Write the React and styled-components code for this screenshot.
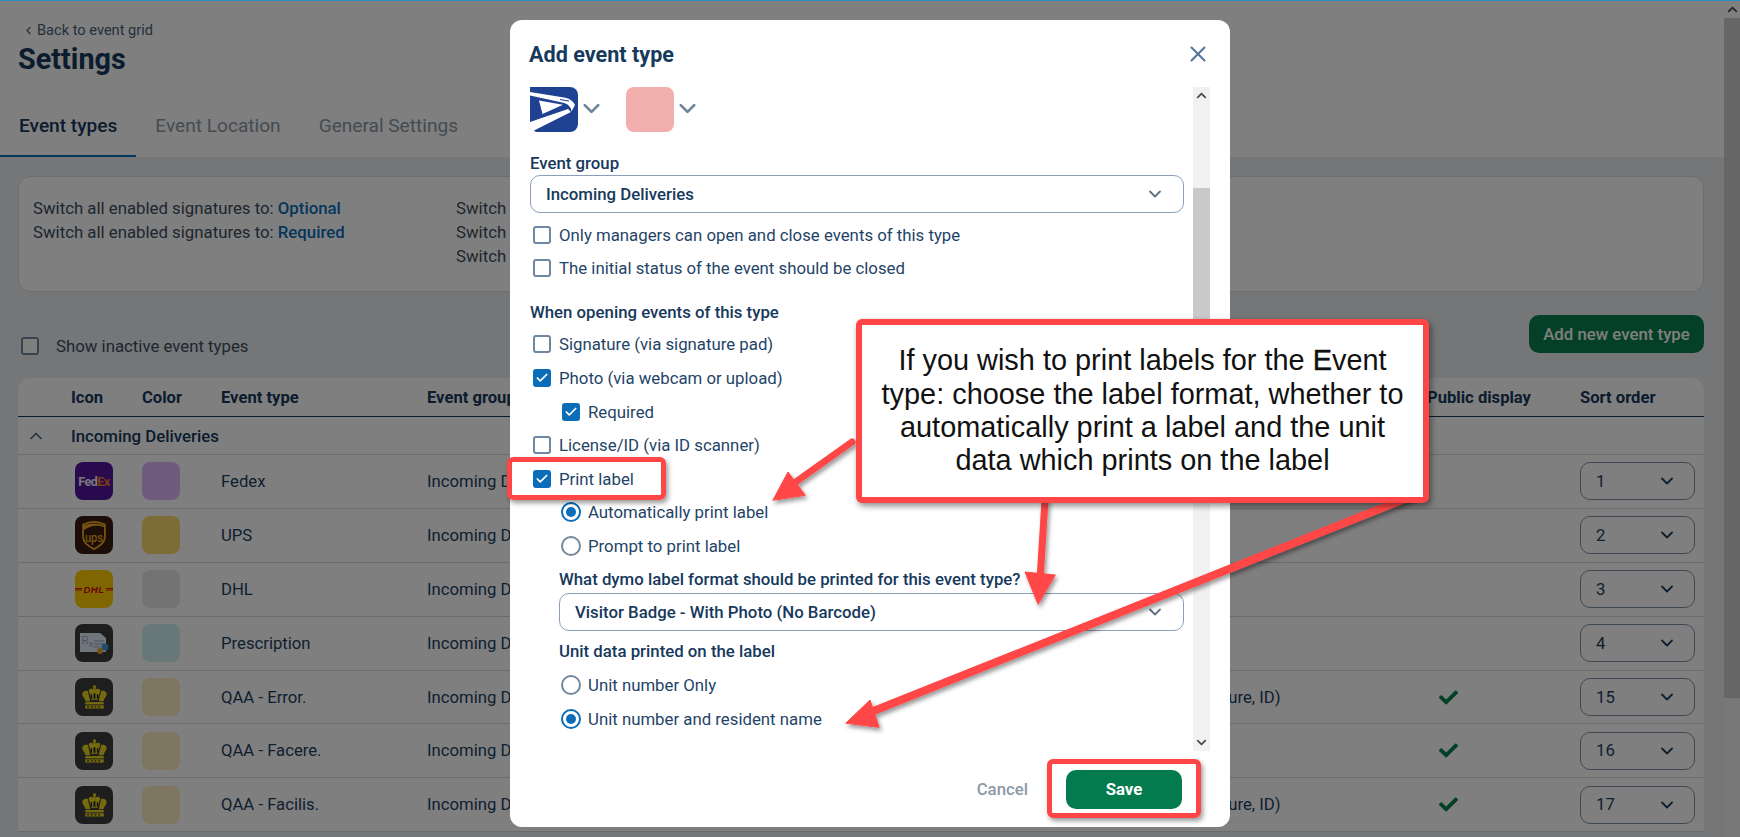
import React from "react";
import styled, { createGlobalStyle } from "styled-components";
import { ChevronDown, ChevronLeft, ChevronUp, Check, X } from "lucide-react";
import { FaCheck } from "react-icons/fa";

const GlobalStyle = createGlobalStyle`
  html, body { margin: 0; padding: 0; }
  body { font-family: Roboto, "Liberation Sans", sans-serif; color: #16395c; }
  * { box-sizing: border-box; }
`;

const Page = styled.div`
  position: relative;
  display: flex;
  width: 1740px;
  height: 837px;
  overflow: hidden;
  background: #ebecf1;
`;
const TopLine = styled.div`
  position: absolute;
  z-index: 5;
  top: 0;
  left: 0;
  right: 0;
  height: 1px;
  background: #2d8ac4;
`;
const Main = styled.div`
  flex: 1;
  min-width: 0;
`;
const PageScrollbar = styled.div`
  width: 16px;
  display: flex;
  flex-direction: column;
  background: #f1f1f1;
`;
const PageScrollBtn = styled.div`
  height: 18px;
  display: flex;
  align-items: center;
  justify-content: center;
  color: #505050;
  background: #ffffff;
`;
const PageScrollThumb = styled.div`
  height: 680px;
  background: #cdcdcd;
`;

/* header */
const Header = styled.header`
  height: 157px;
  background: #fff;
  padding-top: 22px;
  display: flex;
  flex-direction: column;
`;
const BackLink = styled.a`
  display: flex;
  align-items: center;
  gap: 2px;
  padding-left: 22px;
  height: 16px;
  font-size: 14.6px;
  color: #49617a;
`;
const PageTitle = styled.h1`
  margin: 3px 0 0 18px;
  font-size: 28.8px;
  line-height: 36px;
  font-weight: 700;
  color: #16395c;
`;
const Tabs = styled.nav`
  display: flex;
  margin-top: auto;
`;
const Tab = styled.div`
  height: 47px;
  padding: 5px 19px 0;
  font-size: 19.1px;
  line-height: 22px;
  font-weight: ${(p) => (p.$active ? 500 : 400)};
  color: ${(p) => (p.$active ? "#16395c" : "#8a96a3")};
  border-bottom: 2px solid ${(p) => (p.$active ? "#0b6cb8" : "transparent")};
`;

/* content */
const Content = styled.div`
  padding: 19px 20px 0 18px;
`;
const SwitchPanel = styled.section`
  height: 116px;
  padding: 19px 14px;
  background: #fff;
  border: 1px solid #dcdde2;
  border-radius: 12px;
  display: grid;
  grid-template-columns: 423px 1fr;
  font-size: 16.8px;
  line-height: 24px;
  color: #3a4c5e;
`;
const SwitchLine = styled.div`
  white-space: nowrap;
`;
const SwitchLink = styled.span`
  font-weight: 500;
  color: #0b6cb8;
`;
const Toolbar = styled.div`
  height: 86px;
  display: flex;
  align-items: center;
  justify-content: space-between;
  padding: 0 0 0 3px;
`;
const InactiveLabel = styled.div`
  display: flex;
  align-items: center;
  gap: 17px;
  font-size: 16.8px;
  color: #3a4c5e;
  margin-top: 22px;
`;
const AddButton = styled.button`
  width: 175px;
  height: 38px;
  margin-top: -2px;
  border: 0;
  border-radius: 10px;
  background: #06804f;
  color: #fff;
  font: 500 16.8px Roboto, sans-serif;
`;
const TableWrap = styled.div`
  background: #fff;
  border-radius: 12px 12px 0 0;
`;
const columns = "53px 71px 79px 206px 697px 303px 153px 124px";
const HeadRow = styled.div`
  display: grid;
  grid-template-columns: ${columns};
  align-items: center;
  height: 39px;
  font-size: 16.6px;
  font-weight: 700;
  color: #16395c;
  border-bottom: 1px solid #16395c;
  white-space: nowrap;
`;
const GroupRow = styled.div`
  display: grid;
  grid-template-columns: 53px 1fr;
  align-items: center;
  height: 38px;
  font-size: 16.8px;
  font-weight: 500;
  color: #16395c;
  border-bottom: 1px solid #d6d6d6;
`;
const CollapseCell = styled.div`
  display: flex;
  justify-content: center;
  padding-right: 17px;
  color: #4f6578;
`;
const Row = styled.div`
  display: grid;
  grid-template-columns: ${columns};
  align-items: center;
  height: 53.9px;
  font-size: 16.7px;
  color: #1d3f60;
  border-bottom: 1px solid #d6d6d6;
  white-space: nowrap;
`;
const IconBox = styled.div`
  width: 38px;
  height: 38px;
  margin-left: 4px;
  border-radius: 8px;
  overflow: hidden;
  display: flex;
  align-items: center;
  justify-content: center;
  background: ${(p) => p.$bg};
`;
const Swatch = styled.div`
  width: 38px;
  height: 38px;
  border-radius: 8px;
  background: ${(p) => p.$color};
`;
const PublicCheck = styled.div`
  padding-left: 12px;
  color: #06804f;
  display: flex;
`;
const SortSelect = styled.div`
  width: 115px;
  height: 38px;
  padding: 0 17px 0 15px;
  display: flex;
  align-items: center;
  justify-content: space-between;
  border: 1px solid #7f93a8;
  border-radius: 10px;
  font-size: 16.7px;
  color: #1d3f60;
`;

/* modal */
const Backdrop = styled.div`
  position: absolute;
  inset: 0;
  z-index: 2;
  background: rgba(0, 0, 0, 0.5);
  display: flex;
  justify-content: center;
  align-items: flex-start;
  padding-top: 20px;
`;
const Modal = styled.div`
  width: 720px;
  height: 807px;
  background: #fff;
  border-radius: 12px;
  padding: 0 20px;
  display: flex;
  flex-direction: column;
`;
const ModalHead = styled.div`
  height: 67px;
  padding-top: 1px;
  display: flex;
  align-items: center;
  justify-content: space-between;
`;
const ModalTitle = styled.h2`
  margin: 0 0 0 -1px;
  font-size: 21.6px;
  font-weight: 700;
  color: #16395c;
`;
const CloseBtn = styled.div`
  display: flex;
  margin-right: -1px;
  color: #55789a;
`;
const ModalBody = styled.div`
  height: 664px;
  display: flex;
`;
const Form = styled.div`
  flex: 1;
  min-width: 0;
  padding-right: 8px;
`;
const PickerRow = styled.div`
  display: flex;
  align-items: center;
  height: 45px;
`;
const Picker = styled.div`
  display: flex;
  align-items: center;
  margin-right: 21px;
  color: #6c8598;
  svg:last-child { margin-top: -2px; }
`;
const ColorPick = styled.div`
  width: 48px;
  height: 45px;
  border-radius: 8px;
  background: #f2adad;
`;
const FieldLabel = styled.div`
  margin-top: ${(p) => p.$top}px;
  margin-left: ${(p) => p.$indent || 0}px;
  height: 18px;
  font-size: 16.8px;
  line-height: 18px;
  font-weight: 500;
  color: #16395c;
  white-space: nowrap;
`;
const Select = styled.div`
  margin-top: ${(p) => p.$top}px;
  margin-left: ${(p) => p.$indent || 0}px;
  height: 38px;
  padding: 0 18px 0 15px;
  display: flex;
  align-items: center;
  justify-content: space-between;
  border: 1px solid #8aa0b8;
  border-radius: 10px;
  font-size: 16.8px;
  font-weight: 500;
  color: #16395c;
  svg { color: #5b7085; }
`;
const OptionList = styled.div`
  margin-top: ${(p) => p.$top}px;
`;
const Option = styled.div`
  height: 33.6px;
  display: flex;
  align-items: center;
  gap: 8px;
  padding-left: ${(p) => p.$indent || 3}px;
  font-size: 16.8px;
  color: #1f4468;
`;
const Box = styled.span`
  width: 18px;
  height: 18px;
  flex: none;
  display: flex;
  align-items: center;
  justify-content: center;
  border-radius: 3px;
  color: #fff;
  background: ${(p) => (p.$on ? "#0b6cb8" : "#fff")};
  border: 2px solid ${(p) => (p.$on ? "#0b6cb8" : "#6f87a0")};
`;
const Radio = styled.span`
  width: 20px;
  height: 20px;
  flex: none;
  margin-right: -1px;
  border-radius: 50%;
  display: flex;
  align-items: center;
  justify-content: center;
  border: 2px solid ${(p) => (p.$on ? "#0b6cb8" : "#73879a")};
  &::after {
    content: "";
    width: 10px;
    height: 10px;
    border-radius: 50%;
    background: ${(p) => (p.$on ? "#0b6cb8" : "transparent")};
  }
`;
const ScrollTrack = styled.div`
  width: 17px;
  margin-left: 1px;
  display: flex;
  flex-direction: column;
  background: #f1f1f1;
`;
const ScrollArrow = styled.div`
  height: 17px;
  display: flex;
  align-items: center;
  justify-content: center;
  color: #505050;
`;
const ScrollGap = styled.div`
  height: ${(p) => p.$h}px;
`;
const ScrollThumb = styled.div`
  height: 240px;
  background: #c9c9c9;
`;
const Footer = styled.div`
  flex: 1;
  display: flex;
  align-items: center;
  justify-content: flex-end;
  gap: 38px;
  padding: 0 28px 0 0;
`;
const CancelText = styled.span`
  font-size: 16.8px;
  font-weight: 500;
  color: #8d98a5;
`;
const SaveButton = styled.button`
  width: 116px;
  height: 39px;
  border: 0;
  border-radius: 10px;
  background: #047b4e;
  color: #fff;
  font: 700 16.8px Roboto, sans-serif;
`;

/* annotations on top of the screenshot */
const Callout = styled.div`
  position: absolute;
  z-index: 4;
  left: 856px;
  top: 319px;
  width: 573px;
  height: 184px;
  padding: 0 16px;
  display: flex;
  align-items: center;
  justify-content: center;
  text-align: center;
  background: #fff;
  border: 6px solid #ff4646;
  border-radius: 6px;
  box-shadow: 2px 3px 6px rgba(0, 0, 0, 0.45);
  font-family: "Liberation Sans", Arial, sans-serif;
  font-size: 28.9px;
  line-height: 33.3px;
  color: #111;
`;
const CalloutText = styled.div``;
const BoldLetter = styled.span`
  -webkit-text-stroke: 0.4px #111;
`;
const Highlight = styled.div`
  position: absolute;
  z-index: 3;
  left: ${(p) => p.$x}px;
  top: ${(p) => p.$y}px;
  width: ${(p) => p.$w}px;
  height: ${(p) => p.$h}px;
  border: 5px solid #ff4646;
  border-radius: 6px;
  box-shadow: 2px 3px 5px rgba(0, 0, 0, 0.4);
`;
const ArrowLayer = styled.svg`
  position: absolute;
  z-index: 4;
  inset: 0;
  pointer-events: none;
`;

const Crown = () => (
  <svg width="27" height="24" viewBox="0 0 28 26" fill="#ecd41c">
    <circle cx="14" cy="1.8" r="1.6" />
    <rect x="12.8" y="2" width="2.4" height="5" />
    <path d="M14 6c-3-3-7-2-6 1 .6 2 1.8 4 2.4 9h7.2c.6-5 1.8-7 2.4-9 1-3-3-4-6-1z" />
    <path d="M7 6.5C3 5.5 0 8 1 11c.8 2.2 2.6 3.4 3.4 6.5h4.8C8.8 13 7.2 10 7 6.5z" />
    <path d="M21 6.5c4-1 7 1.5 6 4.5-.8 2.2-2.6 3.4-3.4 6.5h-4.8c.4-4.5 2-7.5 2.2-11z" />
    <rect x="4" y="18.5" width="20" height="2.5" />
    <rect x="4" y="22" width="20" height="3.5" />
    <path d="M6 23h2v1.5H6zM10 23h2v1.5h-2zM14 23h2v1.5h-2zM18 23h2v1.5h-2z" fill="#222" />
    <path d="M13 9h2v6h-2zM10 10h1.5v5H10zM16.5 10H18v5h-1.5z" fill="#222" />
  </svg>
);

const LogoText = styled.span`
  font: ${(p) => p.$font};
  color: ${(p) => p.$color};
  letter-spacing: ${(p) => p.$spacing || "0"};
`;

const FedexIcon = () => (
  <IconBox $bg="#55149f">
    <LogoText $font="700 12.5px Roboto, sans-serif" $color="#f2eff6" $spacing="-0.5px">Fed</LogoText>
    <LogoText $font="700 12.5px Roboto, sans-serif" $color="#f0781e" $spacing="-0.5px">Ex</LogoText>
  </IconBox>
);

const UpsIcon = () => (
  <IconBox $bg="#3a1a10">
    <svg width="26" height="29" viewBox="0 0 28 32">
      <path d="M2 4c8-4 16-4 24 0v14c0 6-6 10-12 13C8 28 2 24 2 18z" fill="none" stroke="#e8a81c" strokeWidth="2" />
      <path d="M3 5c7-3 15-3 22 0v2C18 4 10 5 3 10z" fill="#e8a81c" />
      <text x="14" y="23" fontFamily="Roboto, sans-serif" fontWeight="500" fontSize="15" fill="#e8a81c" textAnchor="middle" textLength="20" lengthAdjust="spacingAndGlyphs">ups</text>
    </svg>
  </IconBox>
);

const DhlIcon = () => (
  <IconBox $bg="#ffcc00">
    <svg width="38" height="14" viewBox="0 0 38 14">
      <path d="M0 6.5h7M0 8h7M31 6.5h7M31 8h7" stroke="#d40511" strokeWidth="0.9" />
      <text x="19" y="11" fontFamily="Liberation Sans, sans-serif" fontStyle="italic" fontWeight="700" fontSize="9.5" fill="#d40511" textAnchor="middle" letterSpacing="0.5">DHL</text>
    </svg>
  </IconBox>
);

const RxIcon = () => (
  <IconBox $bg="#3c3c3c">
    <svg width="30" height="24" viewBox="0 0 30 24">
      <path d="M1 2h20l6 5v14H1z" fill="#e3ecf8" />
      <text x="2.5" y="13" fontFamily="Liberation Sans, sans-serif" fontSize="10" fill="#8fa6c9">R<tspan dy="3" fontSize="9">x</tspan></text>
      <path d="M15 10h10M15 13h10M15 16h6" stroke="#8fa6c9" strokeWidth="1.2" />
      <circle cx="26" cy="16" r="3.5" fill="#3d9ad6" />
      <circle cx="21" cy="20" r="3" fill="#e0a528" />
    </svg>
  </IconBox>
);

const CrownIcon = () => (
  <IconBox $bg="#3c3c3c">
    <Crown />
  </IconBox>
);

const UspsLogo = () => (
  <svg width="48" height="45" viewBox="0 0 48 45">
    <path d="M0 0h40a8 8 0 0 1 8 8v29a8 8 0 0 1-8 8H6l-6-4z" fill="#1f4192" />
    <path d="M0 5l34 5.5c6 1 9 3.5 11 7.5l-3.5 6.500C41 20 38 16.5 32 15.500L0 8.500z" fill="#fff" />
    <path d="M9 13.500l24 4.200L12.500 27z" fill="#fff" />
    <path d="M0 35l38-13 3 3L3 44l-3-3z" fill="#fff" />
    <path d="M30 12.500l9 1.500" stroke="#1f4192" strokeWidth="1" />
  </svg>
);

const rows = [
  { icon: <FedexIcon />, color: "#dcb6fb", name: "Fedex", sort: 1 },
  { icon: <UpsIcon />, color: "#fdd86c", name: "UPS", sort: 2 },
  { icon: <DhlIcon />, color: "#e6e6e6", name: "DHL", sort: 3 },
  { icon: <RxIcon />, color: "#d0f0f2", name: "Prescription", sort: 4 },
  { icon: <CrownIcon />, color: "#fdecc0", name: "QAA - Error.", data: "(Photo, Signature, ID)", pub: true, sort: 15 },
  { icon: <CrownIcon />, color: "#fdecc0", name: "QAA - Facere.", pub: true, sort: 16 },
  { icon: <CrownIcon />, color: "#fdecc0", name: "QAA - Facilis.", data: "(Photo, Signature, ID)", pub: true, sort: 17 },
];

const CheckOption = ({ on, indent, children }) => (
  <Option $indent={indent}>
    <Box $on={on}>{on && <Check size={14} strokeWidth={3} />}</Box>
    {children}
  </Option>
);

const RadioOption = ({ on, children }) => (
  <Option $indent={31}>
    <Radio $on={on} />
    {children}
  </Option>
);

export default function App() {
  return (
    <Page>
      <GlobalStyle />
      <TopLine />
      <Main>
        <Header>
          <BackLink>
            <ChevronLeft size={13} strokeWidth={2} />
            Back to event grid
          </BackLink>
          <PageTitle>Settings</PageTitle>
          <Tabs>
            <Tab $active>Event types</Tab>
            <Tab>Event Location</Tab>
            <Tab>General Settings</Tab>
          </Tabs>
        </Header>
        <Content>
          <SwitchPanel>
            <div>
              <SwitchLine>Switch all enabled signatures to: <SwitchLink>Optional</SwitchLink></SwitchLine>
              <SwitchLine>Switch all enabled signatures to: <SwitchLink>Required</SwitchLink></SwitchLine>
            </div>
            <div>
              <SwitchLine>Switch</SwitchLine>
              <SwitchLine>Switch</SwitchLine>
              <SwitchLine>Switch</SwitchLine>
            </div>
          </SwitchPanel>
          <Toolbar>
            <InactiveLabel>
              <Box />
              Show inactive event types
            </InactiveLabel>
            <AddButton>Add new event type</AddButton>
          </Toolbar>
          <TableWrap>
            <HeadRow>
              <span />
              <span>Icon</span>
              <span>Color</span>
              <span>Event type</span>
              <span>Event group</span>
              <span />
              <span>Public display</span>
              <span>Sort order</span>
            </HeadRow>
            <GroupRow>
              <CollapseCell><ChevronUp size={20} /></CollapseCell>
              <span>Incoming Deliveries</span>
            </GroupRow>
            {rows.map((r) => (
              <Row key={r.name}>
                <span />
                {r.icon}
                <Swatch $color={r.color} />
                <span>{r.name}</span>
                <span>Incoming Deliveries</span>
                <span>{r.data}</span>
                {r.pub ? <PublicCheck><FaCheck size={19} /></PublicCheck> : <span />}
                <SortSelect>
                  {r.sort}
                  <ChevronDown size={20} strokeWidth={2.2} />
                </SortSelect>
              </Row>
            ))}
          </TableWrap>
        </Content>
      </Main>
      <PageScrollbar>
        <PageScrollBtn><ChevronUp size={15} strokeWidth={3} /></PageScrollBtn>
        <PageScrollThumb />
      </PageScrollbar>

      <Backdrop>
        <Modal>
          <ModalHead>
            <ModalTitle>Add event type</ModalTitle>
            <CloseBtn><X size={26} strokeWidth={1.9} /></CloseBtn>
          </ModalHead>
          <ModalBody>
            <Form>
              <PickerRow>
                <Picker>
                  <UspsLogo />
                  <ChevronDown size={27} strokeWidth={2.4} />
                </Picker>
                <Picker>
                  <ColorPick />
                  <ChevronDown size={27} strokeWidth={2.4} />
                </Picker>
              </PickerRow>
              <FieldLabel $top={22}>Event group</FieldLabel>
              <Select $top={3}>
                Incoming Deliveries
                <ChevronDown size={20} strokeWidth={2.2} />
              </Select>
              <OptionList $top={5}>
                <CheckOption>Only managers can open and close events of this type</CheckOption>
                <CheckOption>The initial status of the event should be closed</CheckOption>
              </OptionList>
              <FieldLabel $top={18}>When opening events of this type</FieldLabel>
              <OptionList $top={6.5}>
                <CheckOption>Signature (via signature pad)</CheckOption>
                <CheckOption on>Photo (via webcam or upload)</CheckOption>
                <CheckOption on indent={32}>Required</CheckOption>
                <CheckOption>License/ID (via ID scanner)</CheckOption>
                <CheckOption on>Print label</CheckOption>
                <RadioOption on>Automatically print label</RadioOption>
                <RadioOption>Prompt to print label</RadioOption>
              </OptionList>
              <FieldLabel $top={7.5} $indent={29}>What dymo label format should be printed for this event type?</FieldLabel>
              <Select $top={5} $indent={29}>
                Visitor Badge - With Photo (No Barcode)
                <ChevronDown size={20} strokeWidth={2.2} />
              </Select>
              <FieldLabel $top={11} $indent={29}>Unit data printed on the label</FieldLabel>
              <OptionList $top={8}>
                <RadioOption>Unit number Only</RadioOption>
                <RadioOption on>Unit number and resident name</RadioOption>
              </OptionList>
            </Form>
            <ScrollTrack>
              <ScrollArrow><ChevronUp size={15} strokeWidth={3} /></ScrollArrow>
              <ScrollGap $h={84} />
              <ScrollThumb />
              <ScrollGap $h={306} />
              <ScrollArrow><ChevronDown size={15} strokeWidth={3} /></ScrollArrow>
            </ScrollTrack>
          </ModalBody>
          <Footer>
            <CancelText>Cancel</CancelText>
            <SaveButton>Save</SaveButton>
          </Footer>
        </Modal>
      </Backdrop>

      <Highlight $x={507} $y={457} $w={159} $h={43} />
      <Highlight $x={1047} $y={759} $w={154} $h={59} />
      <ArrowLayer width="1740" height="837" viewBox="0 0 1740 837">
        <defs>
          <filter id="arrowShadow" x="-10%" y="-10%" width="120%" height="120%">
            <feDropShadow dx="2" dy="3" stdDeviation="2" floodColor="#000" floodOpacity="0.4" />
          </filter>
        </defs>
        <g filter="url(#arrowShadow)" fill="#ff4646" stroke="#ff4646" strokeLinecap="round">
          <path d="M852 442L790 486" strokeWidth="7" />
          <path d="M773 500L788 472L805 495Z" strokeWidth="1" />
          <path d="M1045 500L1040 580" strokeWidth="7" />
          <path d="M1038 604L1025 572L1055 575Z" strokeWidth="1" />
          <path d="M1412 496L866 714" strokeWidth="8" />
          <path d="M846 723L870 700L879 727Z" strokeWidth="1" />
        </g>
      </ArrowLayer>
      <Callout>
        <CalloutText>
          If you wish to print labels for the <BoldLetter>E</BoldLetter>vent type: choose the label format, whether to automatically print a label and the unit data which prints on the label
        </CalloutText>
      </Callout>
    </Page>
  );
}
